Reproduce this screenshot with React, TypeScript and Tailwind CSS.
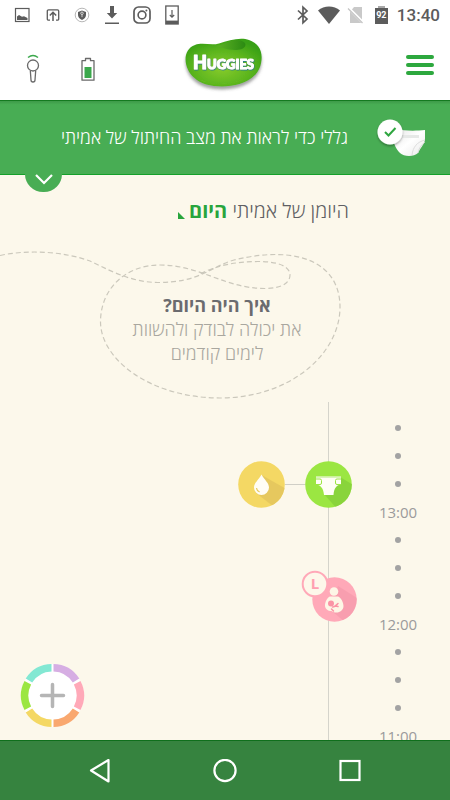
import { useState } from "react";
import type { ReactNode } from "react";

/* ---------- status bar ---------- */

function StatusBar() {
  return (
    <div className="flex h-[30px] shrink-0 items-center justify-between pl-[14px] pr-[10px] text-[#5c5c5c]">
      <div className="flex items-center">
        <svg className="w-4" viewBox="0 0 16 16" fill="none" aria-hidden="true">
          <rect x="1.5" y="1.5" width="13.5" height="13" stroke="currentColor" strokeWidth="1.2" />
          <path d="M3 13V9.500l2-1.500 3 1.800 2-.6 3.500 1.800v2z" fill="currentColor" />
        </svg>
        <svg className="ml-4 w-[14px]" viewBox="0 0 14 16" fill="none" stroke="currentColor" aria-hidden="true">
          <path d="M4 13.200H2.500A1.200 1.200 0 0 1 1.300 12V4A1.200 1.200 0 0 1 2.500 2.800h9A1.200 1.200 0 0 1 12.700 4v8a1.200 1.200 0 0 1-1.200 1.200H10" strokeWidth="1.300" />
          <path d="M7 14V5.500M3.800 8.500 7 5.300l3.200 3.200" strokeWidth="1.500" />
        </svg>
        <svg className="ml-[14px] w-4" viewBox="0 0 16 16" fill="none" aria-hidden="true">
          <circle cx="8" cy="8" r="6.800" stroke="#a5a5a5" strokeWidth="0.800" />
          <path d="M8 3.500 12 5v3c0 2.300-1.600 4-4 5-2.400-1-4-2.700-4-5V5z" fill="currentColor" />
          <path d="M8 10.200V7.500M6.700 6.300a1.300 1.300 0 1 1 2.600 0c0 .8-.6 1.200-1.300 1.200s-1.300-.4-1.300-1.200" stroke="#fff" strokeWidth="0.700" />
        </svg>
        <svg className="ml-[15px] w-[14px]" viewBox="0 0 14 20" fill="currentColor" aria-hidden="true">
          <path d="M5 1h4v7h3.200L7 13.500 1.800 8H5zM0 17.500h14V19H0z" />
        </svg>
        <svg className="ml-[14px] w-[18px]" viewBox="0 0 18 18" fill="none" stroke="currentColor" aria-hidden="true">
          <rect x="1" y="1" width="16" height="16" rx="4.500" strokeWidth="1.700" />
          <circle cx="9" cy="9" r="3.900" strokeWidth="1.600" />
          <circle cx="13.400" cy="4.600" r="1" fill="currentColor" stroke="none" />
        </svg>
        <svg className="ml-[14px] w-[14px]" viewBox="0 0 14 20" fill="none" stroke="currentColor" aria-hidden="true">
          <rect x="0.800" y="1" width="12.400" height="18" strokeWidth="1.300" />
          <path d="M1 17.300h12" strokeWidth="3.400" />
          <path d="M7 5v7M4.800 10 7 12.200 9.200 10" strokeWidth="1.200" />
        </svg>
      </div>
      <div className="flex items-center">
        <svg className="w-[12px]" viewBox="0 0 12 20" fill="none" stroke="currentColor" strokeWidth="1.700" aria-hidden="true">
          <path d="m1 5.500 9 8.500-4 3.800V2.200L10 6l-9 8.500" />
        </svg>
        <svg className="ml-[9px] w-[22px]" viewBox="0 0 22 18" fill="currentColor" aria-hidden="true">
          <path d="M0 4.500C6-.8 16-.8 22 4.500L11 18z" />
        </svg>
        <svg className="ml-[7px] w-[18px]" viewBox="0 0 18 18" aria-hidden="true">
          <path d="M7 1h8v16H3V6z" fill="#c9c9c9" />
          <path d="M1 1.500 16.500 17" stroke="#fff" strokeWidth="3" />
          <path d="M1 2.500 15.500 17" stroke="#c4c4c4" strokeWidth="1.300" />
        </svg>
        <div className="ml-[10px] flex w-[13px] flex-col items-center">
          <span className="h-[2px] w-[7px] bg-[#a8a8a8]" />
          <span className="flex h-4 w-full items-center justify-center bg-[#5c5c5c] font-['Roboto',sans-serif] text-[9px] font-bold text-white">
            92
          </span>
        </div>
        <span className="ml-[9px] font-['Roboto',sans-serif] text-[17px] leading-5 font-medium">13:40</span>
      </div>
    </div>
  );
}

/* ---------- header ---------- */

function HuggiesLogo() {
  return (
    <svg className="h-[60px] w-[84px]" viewBox="0 0 84 60" role="img" aria-label="Huggies">
      <defs>
        <radialGradient id="leaf" cx="48%" cy="62%" r="62%">
          <stop offset="0" stopColor="#86cb2b" />
          <stop offset="0.600" stopColor="#5cb51e" />
          <stop offset="1" stopColor="#38a015" />
        </radialGradient>
        <linearGradient id="dip" x1="0" x2="1">
          <stop offset="0" stopColor="#5fb325" />
          <stop offset="1" stopColor="#2b8a12" />
        </linearGradient>
        <filter id="soft" x="-20%" y="-20%" width="140%" height="150%">
          <feDropShadow dx="0" dy="3" stdDeviation="1.600" floodColor="#555" floodOpacity="0.550" />
        </filter>
        <filter id="letter-edge" x="-10%" y="-20%" width="120%" height="150%">
          <feDropShadow dx="0.500" dy="0.800" stdDeviation="0.500" floodColor="#1d6fa8" floodOpacity="0.900" />
        </filter>
      </defs>
      <path
        d="M12 10C20 7 28 11 36 8.500 46 5 58 2 66 5c9 3 13.500 10 12.500 20-1 12-9 20-22 24-15 4.500-36 3-45-6C1 35-2 15 12 10z"
        fill="url(#leaf)"
        filter="url(#soft)"
      />
      <path d="M33 11c8-1 12-6 20-6 7 0 11 3 9 6.500-2 3.500-9 4-16 3-5-.500-8-3-13-3.500z" fill="url(#dip)" />
      <path d="M13 43c12 7 34 8 48 1-12 6-33 7-48-1z" fill="#a5da4a" opacity="0.700" />
      <text
        x="10"
        y="34"
        fill="#fff"
        stroke="#fff"
        strokeWidth="1"
        strokeLinejoin="round"
        filter="url(#letter-edge)"
        className="font-['Lato',sans-serif] text-[13px] font-black"
      >
        <tspan className="text-[18px]">H</tspan>UGGIES
      </text>
    </svg>
  );
}

function Header() {
  return (
    <header className="grid h-[70px] shrink-0 grid-cols-[1fr_auto_1fr] items-center">
      <div className="flex items-center gap-10 pt-2 pl-[25px]">
        <button type="button" aria-label="חיישן">
          <svg className="h-[30px] w-4" viewBox="0 0 16 30" fill="none" stroke="#6a6a6a" strokeWidth="1.300">
            <path d="M3 3.500c3-2.300 7-2.300 10 0" stroke="#3ba84c" strokeWidth="1.500" />
            <circle cx="8" cy="11.500" r="5.500" />
            <path d="M5.300 16.500 6 26a2 2 0 0 0 4 0l.7-9.500" />
          </svg>
        </button>
        <button type="button" aria-label="סוללה">
          <svg className="h-[30px] w-[14px]" viewBox="0 0 14 30" fill="none">
            <path d="M1 6.700h3.500V4.500h5v2.200H13v19.500H1z" stroke="#6a6a6a" strokeWidth="1.300" strokeLinejoin="round" />
            <path d="M3.500 13h7v11h-7z" fill="#3ba84c" />
          </svg>
        </button>
      </div>
      <HuggiesLogo />
      <div className="flex justify-end pr-4">
        <button type="button" aria-label="תפריט" className="flex w-7 flex-col gap-1">
          <span className="h-1 rounded-full bg-[#2da83e]" />
          <span className="h-1 rounded-full bg-[#2da83e]" />
          <span className="h-1 rounded-full bg-[#2da83e]" />
        </button>
      </div>
    </header>
  );
}

/* ---------- green banner ---------- */

function DiaperStatus() {
  return (
    <svg className="h-[42px] w-[52px] shrink-0" viewBox="0 0 52 42" aria-hidden="true">
      <defs>
        <linearGradient id="pad" x1="0" y1="0" x2="1" y2="1">
          <stop offset="0" stopColor="#e4e4e4" />
          <stop offset="0.500" stopColor="#fff" />
          <stop offset="1" stopColor="#e9e9e9" />
        </linearGradient>
        <filter id="tick-shadow" x="-30%" y="-30%" width="160%" height="170%">
          <feDropShadow dx="0" dy="1.500" stdDeviation="1.200" floodColor="#000" floodOpacity="0.350" />
        </filter>
      </defs>
      <path d="M20 12c8 2 20 2 29 1v9c0 5-5 9-7 14-4 4-14 4-18 0-3-3-7-9-7-16z" fill="url(#pad)" />
      <path d="M26 18h17v3H26z" fill="#e6e8e7" />
      <path d="M49 23c-8 2-12 7-13 15M42 36c1-5 3-8 7-11" fill="none" stroke="#d5d5d5" strokeWidth="0.800" />
      <circle cx="14" cy="15" r="12.500" fill="#fff" filter="url(#tick-shadow)" />
      <path d="m9 15 3.500 3.500 7-7.500" fill="none" stroke="#2fa640" strokeWidth="2" />
    </svg>
  );
}

function Banner() {
  return (
    <section className="relative z-10 shrink-0 border-t border-b border-t-[#147a20] border-b-[#14a02a] bg-[#48ad54]">
      <div className="flex h-[73px] items-center gap-7 bg-linear-to-b from-[#3d9a48] to-transparent to-5% pr-[22px]">
        <DiaperStatus />
        <p className="text-[18px] font-light text-white">גללי כדי לראות את מצב החיתול של אמיתי</p>
      </div>
      <button
        type="button"
        aria-label="פתיחה"
        className="absolute top-full left-[25px] flex h-[18px] w-[37px] justify-center rounded-b-full bg-[#48ad54]"
      >
        <svg className="h-3 w-[18px]" viewBox="0 0 18 12" fill="none" stroke="#fff" strokeWidth="2.200">
          <path d="m1 1 8 8 8-8" />
        </svg>
      </button>
    </section>
  );
}

/* ---------- diary ---------- */

function DayBubble() {
  return (
    <div className="mt-[14px] grid justify-center">
      <svg
        className="h-[163px] w-[450px] [grid-area:1/1]"
        viewBox="0 0 450 163"
        fill="none"
        stroke="#cbc8bc"
        strokeWidth="1.200"
        strokeDasharray="5 3"
        aria-hidden="true"
      >
        <path d="M0 16.500C30 10 65 13 90 22c15 7 40 21.500 68 21.500C200 43.500 210 28 234 21 300 5 340 25 340 68c0 47-50 91-120 91S100 120 100.500 82C101 50 125 26 160 26c40 0 65 23.500 105 23.500 18 0 25-6.500 25-13.500 0-8-10-13.500-32-13.500-23 0-43 4.500-58 12.500" />
      </svg>
      <div className="flex flex-col items-center pt-[54px] pr-4 text-center text-[18px] leading-6 [grid-area:1/1]">
        <h2 className="font-bold text-[#6b6b6f]">איך היה היום?</h2>
        <p className="w-44 font-light text-[#a9a79f]">את יכולה לבודק ולהשוות לימים קודמים</p>
      </div>
    </div>
  );
}

function DropEvent() {
  return (
    <button type="button" aria-label="רטוב" className="shrink-0">
      <svg className="size-[47px]" viewBox="0 0 47 47">
        <clipPath id="drop-clip">
          <circle cx="23.500" cy="23.500" r="23.300" />
        </clipPath>
        <g clipPath="url(#drop-clip)">
          <path d="M0 0h47v47H0z" fill="#f4d864" />
          <path d="M23.500 14 50 29v20H40L18 32z" fill="#e2c45c" opacity="0.800" />
        </g>
        <path d="M23.500 13.500c3 5.500 7.500 8.500 7.500 13a7.500 7.500 0 0 1-15 0c0-4.500 4.500-7.500 7.500-13z" fill="#fffdf5" />
        <path d="M18.500 27c.3 2 1.500 3.500 3.200 4" fill="none" stroke="#e8cb62" strokeWidth="1.200" />
      </svg>
    </button>
  );
}

function DiaperEvent() {
  return (
    <button type="button" aria-label="החלפת חיתול">
      <svg className="size-[47px]" viewBox="0 0 47 47">
        <clipPath id="diaper-clip">
          <circle cx="23.500" cy="23.500" r="23.300" />
        </clipPath>
        <g clipPath="url(#diaper-clip)">
          <path d="M0 0h47v47H0z" fill="#9be642" />
          <path d="M35 16 50 25v24H33L19 33z" fill="#86d03a" opacity="0.850" />
        </g>
        <path d="M11 15.500h25v8c-4 .500-7 3-7.500 10.500h-9.500C18.500 26.500 15 24 11 23.500z" fill="#fffef5" />
        <path d="M11 16.500h25" stroke="#c9eda0" strokeWidth="0.700" />
        <path d="M11 18h4q1.500 0 1.500 1.500v2.500q0 1.500-1.500 1.500H11M36 18h-4q-1.500 0-1.500 1.500v2.500q0 1.500 1.500 1.500h4" fill="none" stroke="#9be642" />
      </svg>
    </button>
  );
}

function NursingEvent() {
  return (
    <button type="button" aria-label="הנקה">
      <svg className="h-[52px] w-[56px]" viewBox="0 0 56 52">
        <clipPath id="nursing-clip">
          <circle cx="33.500" cy="29.500" r="22.200" />
        </clipPath>
        <g clipPath="url(#nursing-clip)">
          <path d="M11 7h45v45H11z" fill="#ffa9b8" />
          <path d="m37 16 22 14v22H44L27 38z" fill="#f59aab" opacity="0.700" />
        </g>
        <circle cx="33" cy="21.500" r="4.300" fill="#fdf6e6" />
        <path d="M29 26.500h8c3 1 5.500 6 5.500 9.500 0 4-3.500 6.500-7 6.500-2 0-3.500-.500-5-1.500-3.500 0-6.500-2-6.500-5.500 0-3 2-8 5-9z" fill="#fdf6e6" />
        <circle cx="30" cy="33.500" r="3" fill="#fb94a6" />
        <path d="M31.500 37c2 .500 3.500-1.500 5.500-3.500M34.500 36l2.500.500M30.500 39l2 2" fill="none" stroke="#fb94a6" strokeWidth="1.500" strokeLinecap="round" />
        <circle cx="14" cy="14" r="12.300" fill="#fdf8ea" stroke="#ffa9b8" strokeWidth="2" />
        <text x="14" y="19" textAnchor="middle" fill="#ffa0b1" className="text-[15px] font-bold">
          L
        </text>
      </svg>
    </button>
  );
}

type Slot = { id: number; hour?: string; side?: ReactNode; event?: ReactNode };

const slots: Slot[] = [
  { id: 1 },
  { id: 2 },
  { id: 3, side: <DropEvent />, event: <DiaperEvent /> },
  { id: 4, hour: "13:00" },
  { id: 5 },
  { id: 6 },
  { id: 7, event: <NursingEvent /> },
  { id: 8, hour: "12:00" },
  { id: 9 },
  { id: 10 },
  { id: 11 },
  { id: 12, hour: "11:00" },
];

function Timeline() {
  return (
    <ol className="pr-1.5">
      <li className="mr-[115px] ml-auto h-3 w-px bg-[#d5d4cb]" />
      {slots.map((slot) => (
        <li key={slot.id} className="grid h-7 grid-cols-[1fr_47px_92px] items-center">
          <div className="flex h-7 items-center justify-end">
            {slot.side}
            {slot.side && <span className="h-px w-5 bg-[#d0cfc6]" />}
          </div>
          <div className="grid h-7 place-items-center">
            <span className="h-7 w-px bg-[#d5d4cb] [grid-area:1/1]" />
            {slot.event && <div className="z-10 -m-3 flex [grid-area:1/1]">{slot.event}</div>}
          </div>
          <div className="flex justify-center text-[15px] leading-7 text-[#9b9b9b]">
            {slot.hour ? <time>{slot.hour}</time> : <span className="size-1.5 rounded-full bg-[#a3a3a3]" />}
          </div>
        </li>
      ))}
    </ol>
  );
}

const wheel = [
  { color: "#d6aee3", d: "M33.500 1a31.500 31.500 0 0 1 25.800 14.500l-6.500 4A24 24 0 0 0 33.500 8.500z" },
  { color: "#ffa9b8", d: "M60.500 18a31.500 31.500 0 0 1 0 29l-6.600-3.500a24 24 0 0 0 0-22z" },
  { color: "#f9a86f", d: "M59.300 49.500A31.500 31.500 0 0 1 33.500 64v-7.500a24 24 0 0 0 19.300-11z" },
  { color: "#f4d864", d: "M31.500 64A31.500 31.500 0 0 1 5.700 49.500l6.500-4A24 24 0 0 0 31.500 56.500z" },
  { color: "#9be642", d: "M4.500 47a31.500 31.500 0 0 1 0-29l6.600 3.500a24 24 0 0 0 0 22z" },
  { color: "#83e8d3", d: "M5.700 15.500A31.500 31.500 0 0 1 31.500 1v7.500a24 24 0 0 0-19.300 11z" },
];

function AddButton({ open, onToggle }: { open: boolean; onToggle: () => void }) {
  return (
    <button
      type="button"
      aria-label="הוספה"
      aria-expanded={open}
      onClick={onToggle}
      className="absolute bottom-3 left-5 rounded-full"
    >
      <svg className="size-[65px]" viewBox="0 0 65 65">
        <circle cx="32.500" cy="32.500" r="31.500" fill="#fff" />
        {wheel.map((part) => (
          <path key={part.color} d={part.d} fill={part.color} />
        ))}
        <path d="M32.500 21.500v22M21.500 32.500h22" stroke="#b5b5b5" strokeWidth="3.500" strokeLinecap="round" />
      </svg>
    </button>
  );
}

/* ---------- android nav ---------- */

function NavBar() {
  return (
    <nav className="flex h-[60px] shrink-0 border-t border-[#0f6f1c] bg-[#36833f] px-[38px]">
      <button type="button" aria-label="Back" className="flex flex-1 items-center justify-center">
        <svg className="size-6" viewBox="0 0 24 24" fill="none" stroke="#fff" strokeWidth="2.200" strokeLinejoin="round">
          <path d="M20.500 1v21.500L3 11.500z" />
        </svg>
      </button>
      <button type="button" aria-label="Home" className="flex flex-1 items-center justify-center">
        <svg className="size-6" viewBox="0 0 24 24" fill="none" stroke="#fff" strokeWidth="2.200">
          <circle cx="12" cy="11.500" r="10.600" />
        </svg>
      </button>
      <button type="button" aria-label="Recent" className="flex flex-1 items-center justify-center">
        <svg className="size-6" viewBox="0 0 24 24" fill="none" stroke="#fff" strokeWidth="2.200">
          <rect x="2.500" y="2" width="19" height="19" />
        </svg>
      </button>
    </nav>
  );
}

export default function App() {
  const [open, setOpen] = useState(false);

  return (
    <div className="flex h-dvh flex-col bg-white font-['Open_Sans','Noto_Sans',sans-serif]">
      <StatusBar />
      <Header />
      <div dir="rtl" className="contents">
        <Banner />
      </div>
      <main className="relative flex-1 overflow-hidden bg-[#fcf8eb]">
        <h1 dir="rtl" className="flex items-center pt-[22px] pr-[101px] text-[20px] leading-7 font-light text-[#5f5f63]">
          <span>
            היומן של אמיתי <b className="font-bold text-[#28a53c]">היום</b>
          </span>
          <svg className="mt-2 mr-1 size-[7px]" viewBox="0 0 7 7" fill="#28a53c" aria-hidden="true">
            <path d="M0 0v7h7z" />
          </svg>
        </h1>
        <div dir="rtl">
          <DayBubble />
        </div>
        <Timeline />
        <AddButton open={open} onToggle={() => setOpen(!open)} />
      </main>
      <NavBar />
    </div>
  );
}
